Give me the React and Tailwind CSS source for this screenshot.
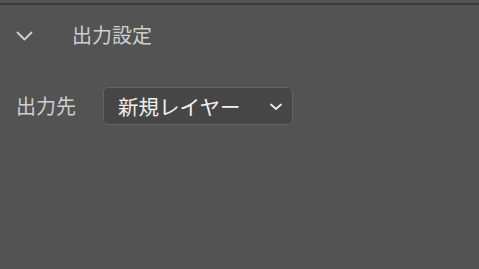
import React from "react";

export default function App() {
  return (
    <div
      className="w-[479px] h-[269px] bg-[#535353] overflow-hidden"
      style={{ fontFamily: '"Noto Sans CJK JP", "Noto Sans", sans-serif' }}
    >
      <div className="h-[3px]" />
      <div className="h-[2px] bg-[#3c3c3c]" />
      <div className="flex items-center h-[64px] pl-[16px] pb-[4px]">
        <svg width="17" height="10" viewBox="0 0 17 10" className="mt-[1px]">
          <path d="M1.5 1.5 L8.5 8.5 L15.5 1.5" fill="none" stroke="#d0d0d0" strokeWidth="1.8" strokeLinecap="round" strokeLinejoin="round" />
        </svg>
        <span className="ml-[39px] text-[20px] leading-none text-[#cfcfcf]">出力設定</span>
      </div>
      <div className="flex items-center mt-[18px] pl-[16px]">
        <span className="text-[20px] leading-none text-[#cfcfcf] w-[87px]">出力先</span>
        <div className="flex items-center w-[190px] h-[38px] rounded-[5px] border border-[#636363] bg-[#464646] pl-[14px] pr-[10px]">
          <span className="text-[20.5px] leading-none text-[#f0f0f0]">新規レイヤー</span>
          <svg width="12" height="8" viewBox="0 0 12 8" className="ml-auto mt-[2px]">
            <path d="M1 1.5 L6 6 L11 1.5" fill="none" stroke="#e8e8e8" strokeWidth="1.8" strokeLinecap="round" strokeLinejoin="round" />
          </svg>
        </div>
      </div>
    </div>
  );
}
